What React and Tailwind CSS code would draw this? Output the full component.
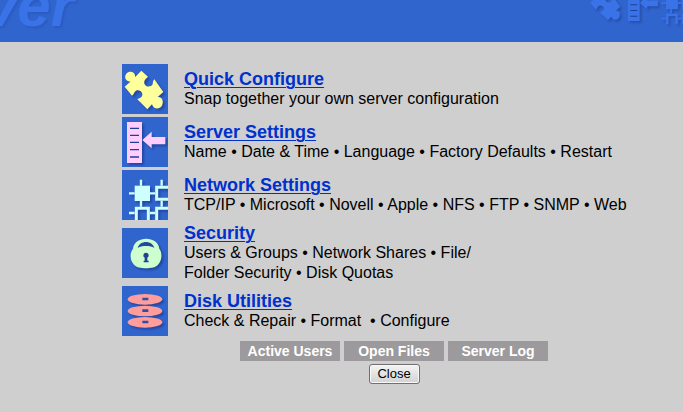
import React from 'react';

const PuzzleIcon = ({ className }) => (
    <svg viewBox="0 0 138 150" className={className} fill="currentColor" aria-hidden="true">
        <path d="M58 20 L78 38 C66 48 65 54 68 61 C73 71 88 69 92 61 C93 54 92 51 97 46 L124 84 L107 99 C120 97 125 109 121 122 C116 137 94 138 90 121 L76 136 L46 106 C55 102 62 99 61 90 C60 82 50 77 42 80 C36 83 36 91 30 95 L8 68 L25 53 C9 52 6 38 13 29 C23 17 43 24 39 40 Z" />
    </svg>
);

const ServerIcon = ({ className }) => (
    <svg viewBox="0 0 138 150" className={className} fill="currentColor" aria-hidden="true">
        <path d="M15 15 H60 V138 H15 Z M61 69 L89 44 V60 H130 V82 H89 V94 Z" />
        <path d="M24 34 H51 M24 55 H51 M24 76 H51 M24 98 H51 M24 120 H51" stroke="#1f3f96" strokeWidth="4" />
    </svg>
);

const NetworkIcon = ({ className }) => (
    <svg viewBox="0 0 138 150" className={className} fill="none" stroke="currentColor" strokeWidth="9" aria-hidden="true">
        <path d="M38 47 H84 V93 H38 Z" fill="currentColor" stroke="none" />
        <path d="M142 52 H104 V88 H142" />
        <path d="M43 156 V115 H79 V156 M142 115 H104 V156" />
        <path d="M57 29 V47 M119 29 V47 M21 70 H38 M84 70 H99 M57 92 V110 M119 92 V110 M21 129 H38 M84 129 H99" strokeWidth="7" />
    </svg>
);

const LockIcon = ({ className }) => (
    <svg viewBox="0 0 138 150" className={className} fill="currentColor" aria-hidden="true">
        <path d="M33 62 C36 22 109 22 112 62 C122 76 120 98 108 110 C98 124 46 124 36 110 C24 98 22 76 33 62 Z" />
        <path d="M47 60 C53 36 91 36 97 60 C85 52 59 52 47 60 Z" fill="#214a9e" />
        <path d="M72 74 a8 8 0 0 1 4 15 V98 H80 V103 H65 V98 H68 V89 A8 8 0 0 1 72 74 Z" fill="#1f4391" />
    </svg>
);

const DiskIcon = ({ className }) => (
    <svg viewBox="0 0 138 150" className={className} fill="currentColor" aria-hidden="true">
        <ellipse cx="69" cy="40" rx="52" ry="16" />
        <ellipse cx="69" cy="75" rx="52" ry="16" />
        <ellipse cx="69" cy="109" rx="52" ry="16" />
        <path d="M61 35 H79 V43 H61 Z M61 70 H79 V78 H61 Z M61 104 H79 V112 H61 Z" fill="#2a50a8" />
    </svg>
);

const sections = [
    {
        title: 'Quick Configure',
        lines: ['Snap together your own server configuration'],
        Icon: PuzzleIcon,
        color: 'text-[#ffff9c]',
    },
    {
        title: 'Server Settings',
        lines: ['Name • Date & Time • Language • Factory Defaults • Restart'],
        Icon: ServerIcon,
        color: 'text-[#ffceff]',
    },
    {
        title: 'Network Settings',
        lines: ['TCP/IP • Microsoft • Novell • Apple • NFS • FTP • SNMP • Web'],
        Icon: NetworkIcon,
        color: 'text-[#ceffff]',
    },
    {
        title: 'Security',
        lines: ['Users & Groups • Network Shares • File/', 'Folder Security • Disk Quotas'],
        Icon: LockIcon,
        color: 'text-[#ceffce]',
    },
    {
        title: 'Disk Utilities',
        lines: ['Check & Repair • Format \u00a0• Configure'],
        Icon: DiskIcon,
        color: 'text-[#ff9c9c]',
    },
];

const actions = ['Active Users', 'Open Files', 'Server Log'];

const App = () => {
    return (
        <div className="min-h-screen bg-[#cfcfcf] font-['Liberation_Sans',Arial,sans-serif] text-black">
            <header className="flex h-[42px] items-start justify-between overflow-hidden bg-[#3165ce] text-[#3973e7]">
                <div className="-mt-6 -ml-4 text-[60px] leading-[60px] font-bold italic [text-shadow:2px_2px_2px_#2c5cc0]">
                    ver
                </div>
                <div className="-mt-[15px] -mr-[9px] flex shrink-0">
                    <PuzzleIcon className="h-[39px] w-9 drop-shadow-[2px_2px_1px_#2650ad]" />
                    <ServerIcon className="h-[39px] w-9 drop-shadow-[2px_2px_1px_#2650ad]" />
                    <NetworkIcon className="-ml-1 h-[39px] w-9 drop-shadow-[2px_2px_1px_#2650ad]" />
                </div>
            </header>

            <main className="pt-[22px] pr-[17px] pb-7 pl-[122px]">
                <ul className="flex flex-col gap-[3px]">
                    {sections.map(({ title, lines, Icon, color }) => (
                        <li key={title} className="flex items-center gap-4">
                            <div className="h-[50px] w-[46px] shrink-0 overflow-hidden bg-[#3165ce]">
                                <Icon className={`h-full w-full drop-shadow-[2px_2px_1px_#2148a0] ${color}`} />
                            </div>
                            <div>
                                <h2 className="text-[18px] leading-5 font-bold">
                                    <a href="#" className="text-[#0031ce] underline decoration-1 underline-offset-2">
                                        {title}
                                    </a>
                                </h2>
                                {lines.map((line) => (
                                    <p key={line} className="text-[16px] leading-5">{line}</p>
                                ))}
                            </div>
                        </li>
                    ))}
                </ul>

                <div className="mt-[5px] flex justify-center gap-1">
                    {actions.map((label) => (
                        <button
                            key={label}
                            type="button"
                            className="h-5 w-[100px] bg-[#9c9a9c] text-[14px] leading-5 font-bold whitespace-nowrap text-white"
                        >
                            {label}
                        </button>
                    ))}
                </div>

                <div className="mt-[3px] flex justify-center">
                    <button
                        type="button"
                        className="h-5 w-[51px] rounded-[3px] border border-[#707070] bg-linear-to-b from-[#f4f4f4] to-[#d2d2d2] text-[13px] leading-[18px] inset-ring inset-ring-[#f8f8f8]"
                    >
                        Close
                    </button>
                </div>
            </main>
        </div>
    );
};

export default App;
